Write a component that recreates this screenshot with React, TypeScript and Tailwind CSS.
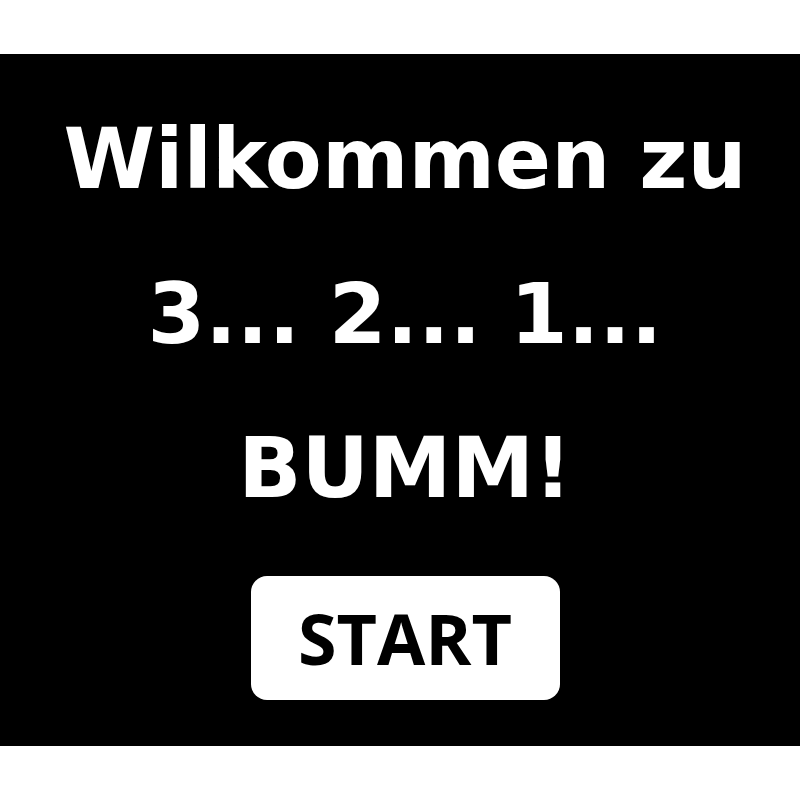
export default function App() {
  return (
    <div className="min-h-screen bg-white flex items-center justify-center">
      <div className="w-full bg-black flex flex-col items-center pt-[29px] pb-[46px] pl-[10px]">
        {["Wilkommen zu", "3... 2... 1...", "BUMM!"].map((line) => (
          <h1
            key={line}
            className="text-white font-bold text-[83px] leading-[154.5px] whitespace-nowrap"
            style={{ fontFamily: '"DejaVu Sans", sans-serif' }}
          >
            {line}
          </h1>
        ))}
        <button className="mt-[29px] w-[309px] h-[124px] rounded-[16px] bg-white text-black flex items-center justify-center font-['Open_Sans',sans-serif] font-bold text-[70px] leading-none">
          START
        </button>
      </div>
    </div>
  );
}
